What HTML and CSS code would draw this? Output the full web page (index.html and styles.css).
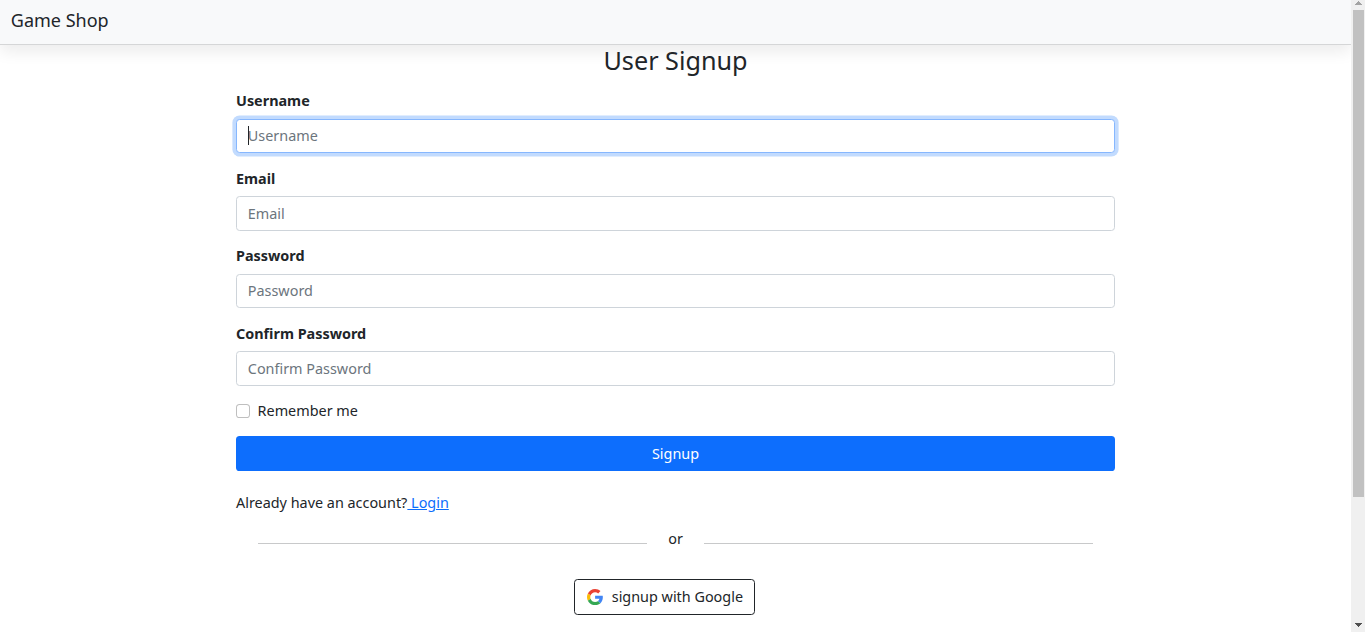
FILE: index.html
```html
<!DOCTYPE html>
<html lang="en">
<head>
<meta charset="utf-8">
<title>Game Shop</title>
<link rel="stylesheet" href="styles.css">
</head>
<body>
<div class="window">
  <div class="page">
    <nav class="navbar"><a class="brand">Game Shop</a></nav>
    <main class="signup">
      <h3 class="title">User Signup</h3>
      <form>
        <div class="field">
          <label class="label" for="username">Username</label>
          <div class="control">
            <input class="input input-active" id="username" type="text" placeholder="Username">
            <span class="caret"></span>
          </div>
        </div>
        <div class="field">
          <label class="label" for="email">Email</label>
          <input class="input" id="email" type="email" placeholder="Email">
        </div>
        <div class="field">
          <label class="label" for="password">Password</label>
          <input class="input" id="password" type="password" placeholder="Password">
        </div>
        <div class="field">
          <label class="label" for="confirm">Confirm Password</label>
          <input class="input" id="confirm" type="password" placeholder="Confirm Password">
        </div>
        <div class="remember">
          <input class="check" id="remember" type="checkbox">
          <label for="remember">Remember me</label>
        </div>
        <button class="submit" type="button">Signup</button>
      </form>
      <p class="account">Already have an account?<a class="link" href="#">&nbsp;Login</a></p>
      <div class="divider"><span class="line"></span><span class="or">or</span><span class="line"></span></div>
      <div class="social">
        <button class="google" type="button">
          <svg class="google-icon" viewBox="0 0 48 48">
            <path fill="#EA4335" d="M24 9.5c3.54 0 6.71 1.22 9.21 3.6l6.85-6.85C35.9 2.38 30.47 0 24 0 14.62 0 6.51 5.38 2.56 13.22l7.98 6.19C12.43 13.72 17.74 9.5 24 9.5z"/>
            <path fill="#4285F4" d="M46.98 24.55c0-1.57-.15-3.09-.38-4.55H24v9.02h12.94c-.58 2.96-2.26 5.48-4.78 7.18l7.73 6c4.51-4.18 7.09-10.36 7.09-17.65z"/>
            <path fill="#FBBC05" d="M10.53 28.59c-.48-1.45-.76-2.99-.76-4.59s.27-3.14.76-4.59l-7.98-6.19C.92 16.46 0 20.12 0 24c0 3.88.92 7.54 2.56 10.78l7.97-6.19z"/>
            <path fill="#34A853" d="M24 48c6.48 0 11.93-2.13 15.89-5.81l-7.73-6c-2.15 1.45-4.92 2.3-8.16 2.3-6.26 0-11.57-4.22-13.47-9.91l-7.98 6.19C6.51 42.62 14.62 48 24 48z"/>
          </svg>
          <span>signup with Google</span>
        </button>
      </div>
    </main>
  </div>
  <div class="scrollbar">
    <svg class="arrow" viewBox="0 0 14 10" shape-rendering="crispEdges"><path fill="#a3a3a3" d="M7 1h1v1h1v1h1v1h1v1H4V4h1V3h1V2h1z"/></svg>
    <div class="thumb"></div>
    <svg class="arrow arrow-down" viewBox="0 0 14 10" shape-rendering="crispEdges"><path fill="#505050" d="M4 1h7v1h-1v1H9v1H8v1H7V4H6V3H5V2H4z"/></svg>
  </div>
</div>
</body>
</html>
```
FILE: styles.css
```css
* { box-sizing: border-box; }

body {
  margin: 0;
  font-family: "Noto Sans", sans-serif;
  font-size: 14.4px;
  line-height: 21.6px;
  color: #212529;
  background: #fff;
}

.window { display: flex; height: 632px; overflow: hidden; }
.page { flex: 1; overflow: hidden; }

.navbar {
  display: flex;
  align-items: center;
  height: 45px;
  padding: 0 10.8px 3px;
  background: #f8f9fa;
  border-bottom: 1px solid #d5d6d7;
  box-shadow: 0 7.2px 14.4px rgba(0, 0, 0, .075);
}
.brand { font-size: 18px; line-height: 27px; }

.signup { width: 879px; margin: 0 auto; }
.title {
  margin: 0 0 14.94px;
  font-size: 25.2px;
  font-weight: 400;
  line-height: 30.2px;
  text-align: center;
}

.field { margin-bottom: 14.4px; }
.label { display: block; margin-bottom: 7.2px; font-weight: 700; }
.control { position: relative; }
.input {
  display: block;
  width: 100%;
  height: 34.3px;
  padding: 5.25px 10.8px 5.45px;
  border: 1px solid #ced4da;
  border-radius: 3.6px;
  outline: 0;
  background: #fff;
  font: inherit;
  color: inherit;
}
.input::placeholder { color: #6c757d; opacity: 1; }
.input-active { border-color: #86b7fe; box-shadow: 0 0 0 3.6px rgba(13, 110, 253, .25); }
.caret { position: absolute; left: 12px; top: 7px; width: 1px; height: 19px; background: #212529; }

.remember { display: flex; align-items: center; gap: 7.2px; height: 21.6px; margin-bottom: 14.4px; }
.check {
  appearance: none;
  width: 14.4px;
  height: 14.4px;
  margin: 0;
  border: 1px solid rgba(0, 0, 0, .25);
  border-radius: 3.6px;
  background: #fff;
}

.submit {
  display: block;
  width: 100%;
  height: 35px;
  padding: 0;
  border: 0;
  border-radius: 3.6px;
  background: #0d6efd;
  font: inherit;
  color: #fff;
}

.account { margin: 20.9px 0 14.4px; }
.link { color: #0d6efd; text-decoration: underline; }

.divider { display: flex; align-items: center; justify-content: space-between; height: 21.6px; padding: 0 22px; }
.line { width: 389px; height: 1px; margin-top: 9px; background: #c8c9ca; }

.social { display: flex; justify-content: center; padding: 29.2px 22px 0 0; }
.google {
  display: flex;
  align-items: center;
  justify-content: center;
  gap: 8.6px;
  width: 181px;
  height: 36px;
  padding: 0 0 0 1px;
  border: 1px solid #212529;
  border-radius: 3.6px;
  background: #fff;
  font: inherit;
  color: #212529;
}
.google-icon { width: 16.2px; height: 16.2px; }

.scrollbar { display: flex; flex-direction: column; width: 14px; background: #f0f0f0; }
.arrow { display: block; width: 14px; height: 10px; }
.thumb { width: 11px; height: 487px; margin-left: 2px; background: #c1c1c1; }
.arrow-down { margin-top: auto; }
```
